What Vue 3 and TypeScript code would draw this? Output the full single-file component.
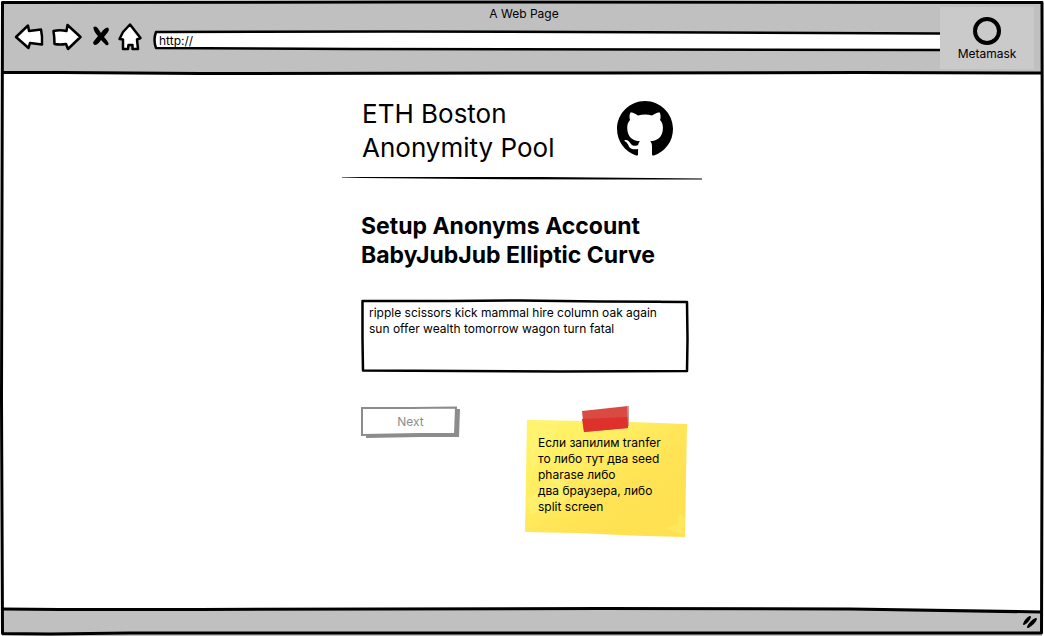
<script setup lang="ts">
import { ref } from 'vue'

interface NavAction {
  label: string
  width: number
  path: string
  solid?: boolean
}

const navActions: NavAction[] = [
  { label: 'Back', width: 30, path: 'M2 14 L14 2.500 L15 8 L27 6.500 Q28.500 13 28 21.500 L16 20 L14.500 25 Z' },
  { label: 'Forward', width: 30, path: 'M1.500 8 Q8 6.500 14.500 8 L15.500 2 L28.500 14 L16 26 L14 21 Q8 22 2.500 21 Q2.500 14 1.500 8 Z' },
  {
    label: 'Stop',
    width: 18,
    solid: true,
    path: 'M1.500 4 Q4 2.500 6 5.500 L9 10 Q12 5 15.500 4.500 Q18 6 16 9 L12 14 Q15 17 16.500 20 Q17 23 14 22 L9 17 Q6 22 2.500 22 Q0 20 2 18 L6 13 Q1 8 1.500 4 Z',
  },
  { label: 'Home', width: 24, path: 'M12 1.500 L22.500 15 L19 16.500 L20 26 L14.500 26 L14.500 22 L10.500 22 L10 26 L5 26 L5 16.500 L1.500 16 L5 9 Z' },
]

const address = ref('http://')
const seedPhrase = ref('ripple scissors kick mammal hire column oak again sun offer wealth tomorrow wagon turn fatal')
const noteLines = ['Если запилим tranfer', 'то либо тут два seed', 'pharase либо', 'два браузера, либо', 'split screen']
</script>

<template>
  <div class="window">
    <header class="chrome">
      <div class="page-title">A Web Page</div>
      <nav class="nav" aria-label="Browser">
        <button v-for="action in navActions" :key="action.label" type="button" class="nav-button" :aria-label="action.label">
          <svg :width="action.width" height="28" :viewBox="`0 0 ${action.width} 28`" aria-hidden="true">
            <path :d="action.path" :class="action.solid ? 'solid' : 'outlined'" />
          </svg>
        </button>
      </nav>
      <div class="address">
        <svg class="sketch" viewBox="0 0 787 22" preserveAspectRatio="none" aria-hidden="true">
          <path class="address-shape" d="M3 2 L240 1.500 L560 2.500 L800 3.500 L800 20 L500 19.500 L200 19 L3 18 Q0 10 3 2 Z" />
        </svg>
        <input v-model="address" class="address-input" type="text" aria-label="Address" />
      </div>
      <button type="button" class="metamask">
        <svg width="28" height="28" viewBox="0 0 28 28" aria-hidden="true">
          <circle cx="14" cy="14" r="12" />
        </svg>
        <span>Metamask</span>
      </button>
      <svg class="chrome-line" viewBox="0 0 1044 6" preserveAspectRatio="none" aria-hidden="true">
        <path class="ink" d="M0 2.500 L60 2.500 L200 3.500 L600 3 L860 2.500 L1044 3" />
      </svg>
    </header>

    <main class="page">
      <div class="brand">
        <h1>ETH Boston<br />Anonymity Pool</h1>
        <a class="github" href="#github" aria-label="GitHub">
          <svg width="56" height="56" viewBox="0 0 16 16" aria-hidden="true">
            <path
              d="M8 0C3.580 0 0 3.580 0 8c0 3.540 2.290 6.530 5.470 7.590.4.070.55-.17.55-.38 0-.19-.01-.82-.01-1.490-2.010.37-2.530-.49-2.690-.94-.09-.23-.48-.94-.82-1.130-.28-.15-.68-.52-.01-.53.63-.01 1.080.58 1.230.82.72 1.210 1.870.87 2.330.66.070-.52.28-.87.51-1.070-1.780-.2-3.640-.89-3.640-3.950 0-.87.31-1.590.82-2.150-.08-.2-.36-1.020.08-2.120 0 0 .67-.21 2.200.82.640-.18 1.320-.27 2-.27s1.360.09 2 .27c1.530-1.040 2.200-.82 2.200-.82.440 1.100.16 1.920.08 2.120.51.56.82 1.270.82 2.150 0 3.070-1.870 3.750-3.650 3.950.29.25.54.73.54 1.480 0 1.070-.01 1.930-.01 2.200 0 .21.15.46.55.38A8.013 8.013 0 0 0 16 8c0-4.420-3.580-8-8-8z"
            />
          </svg>
        </a>
      </div>
      <svg class="rule" viewBox="0 0 360 6" preserveAspectRatio="none" aria-hidden="true">
        <path d="M0 2 L70 2 L200 2 L310 3 L360 3.500 L360 4.500 L260 4.500 L130 4 L20 3 L0 2.500 Z" />
      </svg>

      <form class="setup" @submit.prevent>
        <h2><label for="seed">Setup Anonyms Account<br />BabyJubJub Elliptic Curve</label></h2>
        <div class="seed-box">
          <svg class="sketch" viewBox="0 0 329 74" preserveAspectRatio="none" aria-hidden="true">
            <path class="ink box-ink" d="M1.500 2 L90 2 L160 1.500 L240 2.500 L327 3 L327.500 40 L327 72 L200 72.500 L100 72 L2 71.500 L1.500 40 Z" />
          </svg>
          <textarea id="seed" v-model="seedPhrase" spellcheck="false"></textarea>
        </div>
        <div class="actions">
          <button type="submit" class="next" disabled>
            <svg class="sketch" viewBox="0 0 99 32" preserveAspectRatio="none" aria-hidden="true">
              <path class="next-shadow" d="M5 28 L95 28 L94 3 L99 3 L98 31 L60 31 L5 32 Z" />
              <path class="next-face" d="M1 2 L50 2 L95 1.500 L94 28 L60 28 L1 29 Z" />
            </svg>
            <span class="next-label">Next</span>
          </button>
          <aside class="note">
            <svg class="sketch" viewBox="0 0 164 132" preserveAspectRatio="none" aria-hidden="true">
              <defs>
                <linearGradient id="note-paper" x1="0" y1="0" x2="1" y2="1">
                  <stop offset="0" stop-color="#fff568" />
                  <stop offset="0.35" stop-color="#ffed62" />
                  <stop offset="0.6" stop-color="#ffe354" />
                  <stop offset="1" stop-color="#ffe050" />
                </linearGradient>
              </defs>
              <path fill="url(#note-paper)" d="M2 14 L60 15 L105 16 L162 18 L160 131 L120 130 L50 127 L0 126 Z" />
              <path fill="#fff374" opacity="0.6" d="M3 14 L36 15 L22 42 L6 66 Z M2 92 L34 70 L48 90 L22 104 L5 108 Z" />
              <path fill="#fff06c" opacity="0.5" d="M140 122 L153 118 L154 107 L160 112 L159 129 Z" />
              <path fill="#d94b42" d="M57 5 L103 0 L103 22 L59 26 Z" />
              <path fill="#de312c" d="M57 13 L103 11 L103 22 L59 26 Z" />
              <path fill="#c99a99" d="M102 0 L104 0 L104 20 L103 20 Z" />
            </svg>
            <p class="note-text"><span v-for="line in noteLines" :key="line">{{ line }}</span></p>
          </aside>
        </div>
      </form>
    </main>

    <footer class="status">
      <svg class="sketch" viewBox="0 0 1044 30" preserveAspectRatio="none" aria-hidden="true">
        <path class="status-fill" d="M2 3 L200 3.500 L600 2.500 L850 3 L1042 6 L1042 30 L2 30 Z" />
        <path class="ink" d="M2 3 L60 3.500 L200 3.500 L600 2.500 L850 3 L1042 6" />
      </svg>
      <svg class="grip" width="18" height="16" viewBox="0 0 18 16" aria-hidden="true">
        <path d="M2 11 Q4 6 8 4 Q7 8 2 11 Z M6 14 Q9 8 14 6 Q12 11 6 14 Z" />
      </svg>
    </footer>

    <svg class="frame" viewBox="0 0 1044 636" preserveAspectRatio="none" aria-hidden="true">
      <path class="ink" d="M2.500 2.500 L400 2 L1042 2.500 L1042.500 300 L1041.500 633 L700 633 L400 633 L130 633 L50 634 L2.500 633.500 L1.500 400 L2 200 Z" />
    </svg>
  </div>
</template>

<style>
body {
  margin: 0;
  background: #fff;
}
</style>

<style scoped>
.window {
  position: relative;
  display: flex;
  flex-direction: column;
  min-height: 100vh;
  box-sizing: border-box;
  padding: 2px 0 0;
  color: #000;
  font-family: Inter, "Noto Sans", sans-serif;
  font-size: 12px;
  line-height: 16px;
}

button,
input,
textarea {
  margin: 0;
  padding: 0;
  border: 0;
  background: none;
  color: inherit;
  font: inherit;
}

.sketch {
  position: absolute;
  inset: 0;
  width: 100%;
  height: 100%;
  overflow: hidden;
}

.ink {
  fill: none;
  stroke: #000;
  stroke-width: 3;
  stroke-linejoin: round;
  vector-effect: non-scaling-stroke;
}

.box-ink {
  stroke-width: 2.500;
}

.frame {
  position: absolute;
  inset: 0;
  width: 100%;
  height: 100%;
  pointer-events: none;
}

.chrome {
  position: relative;
  display: grid;
  grid-template-columns: auto 1fr 94px;
  grid-template-rows: 21px 1fr;
  height: 70px;
  margin: 0 2px;
  padding: 0 8px 0 12px;
  background: #c0c0c0;
}

.page-title {
  grid-column: 1 / -1;
  grid-row: 1;
  padding: 4px 0 0;
  text-align: center;
}

.nav {
  display: flex;
  align-items: flex-start;
  gap: 8px;
  padding-right: 11px;
}

.nav-button svg {
  display: block;
}

.nav-button:nth-child(3) {
  margin-left: 2px;
}

.outlined {
  fill: #fff;
  stroke: #000;
  stroke-width: 2.500;
  stroke-linejoin: round;
}

.address {
  position: relative;
  height: 22px;
  margin-top: 7px;
}

.address-shape {
  fill: #fff;
  stroke: #000;
  stroke-width: 2.500;
  stroke-linejoin: round;
  vector-effect: non-scaling-stroke;
}

.address-input {
  position: relative;
  display: block;
  box-sizing: border-box;
  width: 100%;
  height: 20px;
  padding: 0 6px;
}

.metamask {
  position: relative;
  grid-column: 3;
  grid-row: 1 / 3;
  display: flex;
  flex-direction: column;
  align-items: center;
  gap: 1px;
  height: 62px;
  margin-top: 5px;
  padding-top: 10px;
  background: #cacaca;
}

.metamask circle {
  fill: none;
  stroke: #000;
  stroke-width: 4;
}

.chrome-line {
  position: absolute;
  left: 0;
  bottom: -4px;
  width: 100%;
  height: 6px;
}

.page {
  flex: 1;
  width: 360px;
  max-width: 100%;
  margin: 0 auto;
  padding-top: 25px;
}

.brand {
  display: flex;
  justify-content: space-between;
  padding: 0 29px 0 20px;
}

h1 {
  margin: 0;
  font-size: 26px;
  font-weight: 400;
  line-height: 34px;
}

.github {
  padding-top: 4px;
  color: #000;
}

.github svg {
  display: block;
  fill: currentColor;
}

.rule {
  display: block;
  width: 100%;
  height: 6px;
  margin-top: 10px;
}

.setup {
  padding: 0 13px 0 19px;
}

h2 {
  margin: 31px 0 0;
  font-size: 23px;
  font-weight: 700;
  line-height: 29px;
}

.seed-box {
  position: relative;
  height: 74px;
  margin-top: 29px;
}

textarea {
  position: relative;
  display: block;
  box-sizing: border-box;
  width: 100%;
  height: 100%;
  padding: 6px 20px 6px 8px;
  resize: none;
  outline: none;
}

.actions {
  display: flex;
  justify-content: space-between;
  align-items: flex-start;
  margin-top: 33px;
}

.next {
  position: relative;
  width: 99px;
  height: 32px;
  color: #8c8c8c;
}

.next-label {
  position: relative;
}

.next-shadow {
  fill: #8c8c8c;
}

.next-face {
  fill: #fff;
  stroke: #8c8c8c;
  stroke-width: 2;
  vector-effect: non-scaling-stroke;
}

.note {
  position: relative;
  box-sizing: border-box;
  width: 164px;
  min-height: 132px;
  padding: 29px 8px 23px 13px;
}

.note-text {
  position: relative;
  margin: 0;
}

.note-text span {
  display: block;
  white-space: nowrap;
}

.status {
  position: relative;
  display: flex;
  justify-content: flex-end;
  align-items: center;
  height: 30px;
  padding-right: 4px;
}

.status-fill {
  fill: #c0c0c0;
}

.grip {
  position: relative;
}

.grip path {
  fill: #000;
  stroke: #000;
  stroke-width: 2;
  stroke-linejoin: round;
}
</style>
